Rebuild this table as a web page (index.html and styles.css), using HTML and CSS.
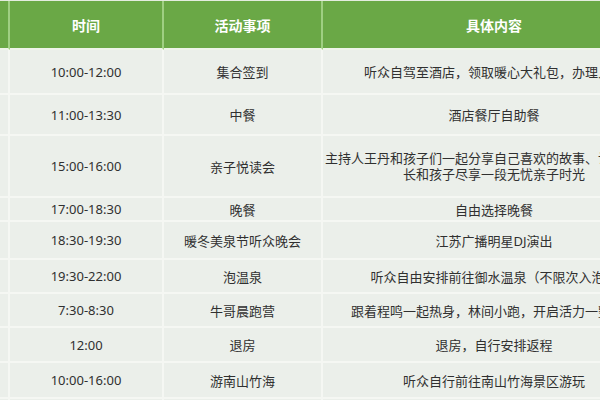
FILE: index.html
```html
<!DOCTYPE html>
<html lang="zh">
<head>
<meta charset="utf-8">
<title>活动安排</title>
<link rel="stylesheet" href="styles.css">
</head>
<body>
<div class="frame">
  <div class="sheet">
    <div class="row head h50">
      <div class="cell c0"></div>
      <div class="cell c1">时间</div>
      <div class="cell c2">活动事项</div>
      <div class="cell c3">具体内容</div>
    </div>
    <div class="row h45">
      <div class="cell c0"></div>
      <div class="cell c1">10:00-12:00</div>
      <div class="cell c2">集合签到</div>
      <div class="cell c3">听众自驾至酒店，领取暖心大礼包，办理入住</div>
    </div>
    <div class="row h41">
      <div class="cell c0"></div>
      <div class="cell c1">11:00-13:30</div>
      <div class="cell c2">中餐</div>
      <div class="cell c3">酒店餐厅自助餐</div>
    </div>
    <div class="row h62">
      <div class="cell c0"></div>
      <div class="cell c1">15:00-16:00</div>
      <div class="cell c2">亲子悦读会</div>
      <div class="cell c3 multi">主持人王丹和孩子们一起分享自己喜欢的故事、让更多的家<br>长和孩子尽享一段无忧亲子时光</div>
    </div>
    <div class="row h24">
      <div class="cell c0"></div>
      <div class="cell c1">17:00-18:30</div>
      <div class="cell c2">晚餐</div>
      <div class="cell c3">自由选择晚餐</div>
    </div>
    <div class="row h38">
      <div class="cell c0"></div>
      <div class="cell c1">18:30-19:30</div>
      <div class="cell c2">暖冬美泉节听众晚会</div>
      <div class="cell c3">江苏广播明星DJ演出</div>
    </div>
    <div class="row h34">
      <div class="cell c0"></div>
      <div class="cell c1">19:30-22:00</div>
      <div class="cell c2">泡温泉</div>
      <div class="cell c3">听众自由安排前往御水温泉（不限次入泡）</div>
    </div>
    <div class="row h34">
      <div class="cell c0"></div>
      <div class="cell c1">7:30-8:30</div>
      <div class="cell c2">牛哥晨跑营</div>
      <div class="cell c3">跟着程鸣一起热身，林间小跑，开启活力一整天！</div>
    </div>
    <div class="row h35">
      <div class="cell c0"></div>
      <div class="cell c1">12:00</div>
      <div class="cell c2">退房</div>
      <div class="cell c3">退房，自行安排返程</div>
    </div>
    <div class="row h36">
      <div class="cell c0"></div>
      <div class="cell c1">10:00-16:00</div>
      <div class="cell c2">游南山竹海</div>
      <div class="cell c3">听众自行前往南山竹海景区游玩</div>
    </div>
    <div class="row h36">
      <div class="cell c0"></div>
      <div class="cell c1"></div>
      <div class="cell c2"></div>
      <div class="cell c3"></div>
    </div>
  </div>
</div>
</body>
</html>
```

FILE: styles.css
```css
html, body {
  margin: 0;
  padding: 0;
  background: #ebefea;
  overflow: hidden;
}

.frame {
  width: 600px;
  height: 400px;
  overflow: hidden;
  border-top: 1px solid #e4ecdf;
  box-sizing: border-box;
}

.sheet {
  margin-left: -60px;
  width: 733px;
  font-family: "Noto Sans", "Noto Sans CJK SC", sans-serif;
  font-size: 13px;
  color: #303030;
}

.row {
  display: flex;
}

.h50 { height: 49px; }
.h45 { height: 45px; }
.h41 { height: 41px; }
.h62 { height: 62px; }
.h24 { height: 24px; }
.h38 { height: 38px; }
.h34 { height: 34px; }
.h35 { height: 35px; }
.h36 { height: 36px; }

.cell {
  box-sizing: border-box;
  display: flex;
  align-items: center;
  justify-content: center;
  text-align: center;
  white-space: nowrap;
  border-right: 2px solid #f5f7f3;
  border-bottom: 2px solid #f5f7f3;
  background: #ebefea;
  overflow: visible;
}

.c0 { width: 70px; flex: none; }
.c1 { width: 154px; flex: none; }
.c2 { width: 159px; flex: none; }
.c3 { width: 344px; flex: none; }

.multi {
  line-height: 16px;
}

.head .cell {
  background: #6aa846;
  color: #ffffff;
  font-weight: bold;
  font-size: 14px;
  border-right-color: #9fcf82;
  border-bottom-color: #eef4e9;
}
```
